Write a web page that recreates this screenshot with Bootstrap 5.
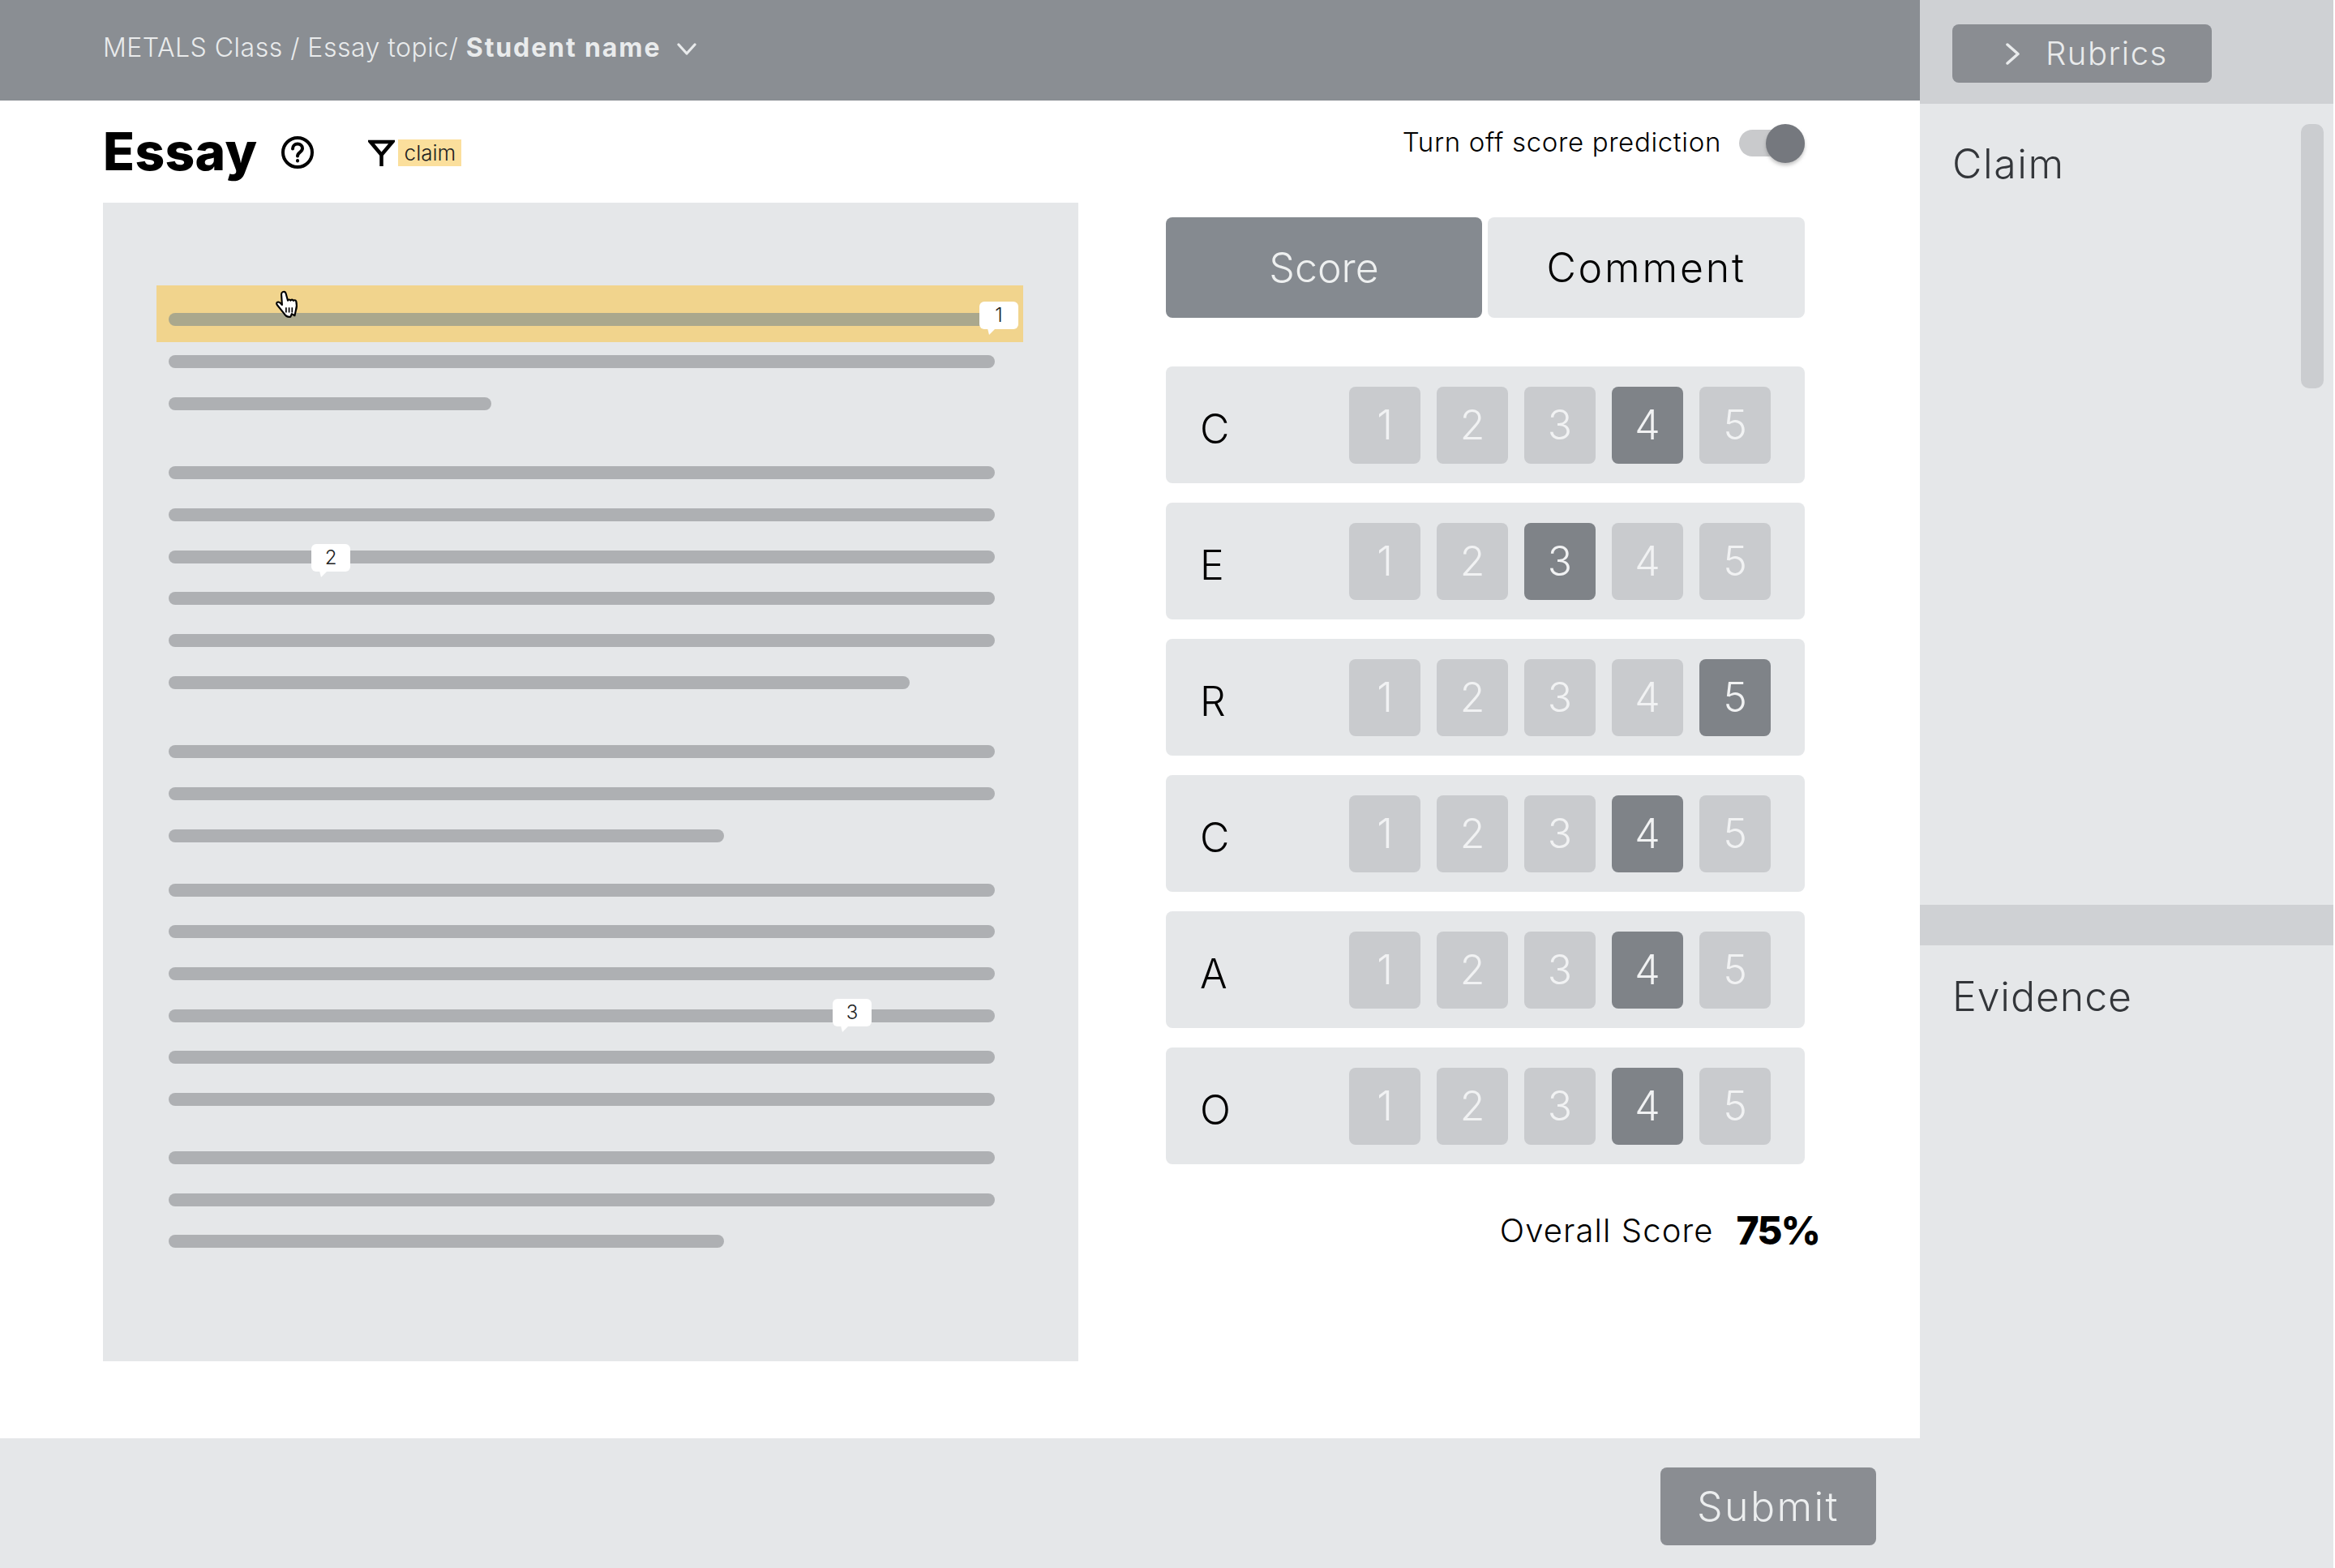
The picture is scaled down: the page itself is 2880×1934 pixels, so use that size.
<!doctype html>
<html lang="en">
<head>
<meta charset="utf-8">
<title>Essay</title>
<link rel="stylesheet" href="https://cdn.jsdelivr.net/npm/bootstrap@5.3.0/dist/css/bootstrap.min.css">
<style>
html,body{width:2880px;height:1934px;overflow:hidden;background:#fff}
body{font-family:"Inter","Liberation Sans",sans-serif;font-weight:300;color:#000}
.shell{width:2880px;height:1934px}
.left-col{width:2368px}
.top-strip{height:124px;background:#8a8e93;color:#e9ebec;font-size:32px;padding:0 0 7px 127px}
.top-strip strong{font-weight:700;letter-spacing:1.9px}
.crumb{letter-spacing:.5px}
.crumb-arrow{margin-left:20px;margin-top:4px}
.work{padding:0 142px 0 127px}
.title-line{height:126px}
.essay-title{font-size:64px;font-weight:800;line-height:1;margin:0 30px 0 0;letter-spacing:.4px}
.help-ic{margin-top:2px}
.filter-ic{margin-left:67px;margin-right:4px;margin-top:2px}
.tag-chip{width:78px;height:33px;margin-top:3px;background:#fbdf9c;font-size:26px;font-weight:300;line-height:33px;text-align:center;color:#222}
.toggle-wrap{margin-top:-22px}
.toggle-label{font-size:33px;letter-spacing:.65px;font-weight:300;margin-right:22px}
.toggle-track{width:81px;height:33px;border-radius:17px;background:#c9cacc}
.toggle-knob{position:absolute;right:0;top:-7px;width:48px;height:48px;border-radius:50%;background:#75787e;box-shadow:0 3px 4px rgba(90,90,90,.35)}
.essay-panel{width:1203px;height:1429px;background:#e5e7e9;padding:102px 103px 0 81px;flex:none}
.hl{background:#f1d48d;margin:0 -35px 0 -15px;padding:34px 35px 20px 15px}
.stack{gap:35.7px}
.gap-a{margin-top:16px}
.gap-b{margin-top:69.5px}
.gap-c{margin-top:51px}
.gap-d{margin-top:56px}
.line-bar{height:16px;border-radius:8px;background:#aeb0b3;position:relative}
.line-bar.on{background:#aaa88d}
.w-a{width:398px}.w-b{width:914px}.w-c{width:685px}
.pin{position:absolute;width:48px;height:34px;background:#fff;border-radius:6px;font-size:24px;line-height:34px;text-align:center;font-weight:300;color:#222}
.pin::after{content:"";position:absolute;left:10px;top:33px;border-style:solid;border-width:8px 8px 0 2px;border-color:#fff transparent transparent transparent}
.pin-1{right:-29px;top:-14px}
.pin-2{left:176px;top:-8px}
.pin-3{left:819px;top:-13px}
.hand{position:absolute;left:339px;top:358px;width:32px;height:36px}
.score-col{width:788px;margin-left:108px;padding-top:18px;flex:none}
.tabs-grid{display:grid;grid-template-columns:390px 391px;gap:7px;height:124px}
.tab-btn{font-size:50px;font-weight:300;border:0;border-radius:8px;padding:0}
.tab-on,.tab-on:hover{background:#858a90;color:#eef0f0}
.tab-off,.tab-off:hover{background:#e5e7e9;color:#000;letter-spacing:2.8px}
.crit-list{margin-top:60px;gap:24px}
.crit-row{height:144px;background:#e5e7e9;border-radius:8px;padding:0 42px 0 42px}
.crit-letter{font-size:50px;font-weight:300;line-height:1;width:184px;padding-top:9px}
.num-row{gap:20px}
.num-btn{width:88px;height:95px;padding:0;border:0;border-radius:8px;background:#c9cbce;color:#f1f2f3;font-size:50px;font-weight:300;line-height:1}
.num-btn:hover{background:#c9cbce;color:#f1f2f3}
.num-btn.picked,.num-btn.picked:hover{background:#7f8388;color:#f1f2f3}
.overall{margin-top:52px;margin-right:-18px;height:60px}
.overall-label{font-size:40px;font-weight:300;letter-spacing:1.1px;margin-right:28px}
.overall-val{font-size:48px;font-weight:800;letter-spacing:-2px}
.foot-strip{height:160px;background:#e5e7e9;padding:36px 54px 0 0}
.submit-btn,.submit-btn:hover{width:266px;height:96px;background:#8a8d92;color:#eceeef;border:0;border-radius:8px;font-size:50px;font-weight:300;padding:0;letter-spacing:2.4px}
.side-col{width:510px;margin-right:2px;background:#e5e7e9}
.side-top{height:128px;background:#cfd1d4;padding:30px 0 0 40px}
.rub-btn,.rub-btn:hover{width:320px;height:72px;background:#8a8d92;color:#e9ebec;border:0;border-radius:8px;font-size:40px;font-weight:300;padding:0 0 0 66px;gap:31px;letter-spacing:1.5px}
.side-claim{height:988px;padding:44px 0 0 40px;position:relative}
.side-head{font-size:50px;font-weight:300;color:#33363a;line-height:60px;margin:0;letter-spacing:.9px}
.side-claim .side-head{letter-spacing:1.6px}
.side-thumb{position:absolute;left:470px;top:25px;width:28px;height:326px;border-radius:10px;background:#cbcdd0}
.side-split{height:50px;background:#cfd1d4}
.side-evi{padding:33px 0 0 40px}
</style>
</head>
<body>
<div class="shell d-flex">
  <div class="left-col d-flex flex-column">
    <header class="top-strip d-flex align-items-center">
      <span class="crumb">METALS Class / Essay topic/ <strong>Student name</strong></span>
      <svg class="crumb-arrow" width="24" height="15" viewBox="0 0 24 15" fill="none" stroke="#e9ebec" stroke-width="3.2" stroke-linecap="round" stroke-linejoin="round"><path d="M2 2l10 11L22 2"/></svg>
    </header>
    <main class="work flex-grow-1 position-relative">
      <div class="title-line d-flex align-items-center">
        <h1 class="essay-title">Essay</h1>
        <svg class="help-ic" width="40" height="40" viewBox="0 0 40 40" fill="none" stroke="#000" stroke-width="4" stroke-linecap="round"><circle cx="20" cy="20" r="18"/><path d="M14 15.500c0-3.500 2.700-6 6-6s6 2.400 6 5.500c0 4.500-6 5-6 9.500" /><path d="M20 30v.5"/></svg>
        <svg class="filter-ic" width="33" height="33" viewBox="0 0 33 33" fill="none" stroke="#000" stroke-width="4.500" stroke-linejoin="miter"><path d="M3 3h27L16.500 19z"/><path d="M16.500 18v15"/></svg>
        <span class="tag-chip">claim</span>
        <div class="toggle-wrap ms-auto d-flex align-items-center">
          <span class="toggle-label">Turn off score prediction</span>
          <span class="toggle-track position-relative d-block"><span class="toggle-knob"></span></span>
        </div>
      </div>
      <div class="d-flex">
        <section class="essay-panel d-flex flex-column">
          <div class="hl"><div class="line-bar on"><span class="pin pin-1">1</span></div></div>
          <div class="stack d-flex flex-column gap-a">
            <div class="line-bar"></div>
            <div class="line-bar w-a"></div>
          </div>
          <div class="stack d-flex flex-column gap-b">
            <div class="line-bar"></div>
            <div class="line-bar"></div>
            <div class="line-bar"><span class="pin pin-2">2</span></div>
            <div class="line-bar"></div>
            <div class="line-bar"></div>
            <div class="line-bar w-b"></div>
          </div>
          <div class="stack d-flex flex-column gap-b">
            <div class="line-bar"></div>
            <div class="line-bar"></div>
            <div class="line-bar w-c"></div>
          </div>
          <div class="stack d-flex flex-column gap-c">
            <div class="line-bar"></div>
            <div class="line-bar"></div>
            <div class="line-bar"></div>
            <div class="line-bar"><span class="pin pin-3">3</span></div>
            <div class="line-bar"></div>
            <div class="line-bar"></div>
          </div>
          <div class="stack d-flex flex-column gap-d">
            <div class="line-bar"></div>
            <div class="line-bar"></div>
            <div class="line-bar w-c"></div>
          </div>
        </section>
        <section class="score-col">
          <div class="tabs-grid">
            <button class="btn tab-btn tab-on" type="button">Score</button>
            <button class="btn tab-btn tab-off" type="button">Comment</button>
          </div>
          <div class="crit-list d-flex flex-column">
            <div class="crit-row d-flex align-items-center"><span class="crit-letter">C</span><div class="num-row d-flex"><button class="btn num-btn" type="button">1</button><button class="btn num-btn" type="button">2</button><button class="btn num-btn" type="button">3</button><button class="btn num-btn picked" type="button">4</button><button class="btn num-btn" type="button">5</button></div></div>
            <div class="crit-row d-flex align-items-center"><span class="crit-letter">E</span><div class="num-row d-flex"><button class="btn num-btn" type="button">1</button><button class="btn num-btn" type="button">2</button><button class="btn num-btn picked" type="button">3</button><button class="btn num-btn" type="button">4</button><button class="btn num-btn" type="button">5</button></div></div>
            <div class="crit-row d-flex align-items-center"><span class="crit-letter">R</span><div class="num-row d-flex"><button class="btn num-btn" type="button">1</button><button class="btn num-btn" type="button">2</button><button class="btn num-btn" type="button">3</button><button class="btn num-btn" type="button">4</button><button class="btn num-btn picked" type="button">5</button></div></div>
            <div class="crit-row d-flex align-items-center"><span class="crit-letter">C</span><div class="num-row d-flex"><button class="btn num-btn" type="button">1</button><button class="btn num-btn" type="button">2</button><button class="btn num-btn" type="button">3</button><button class="btn num-btn picked" type="button">4</button><button class="btn num-btn" type="button">5</button></div></div>
            <div class="crit-row d-flex align-items-center"><span class="crit-letter">A</span><div class="num-row d-flex"><button class="btn num-btn" type="button">1</button><button class="btn num-btn" type="button">2</button><button class="btn num-btn" type="button">3</button><button class="btn num-btn picked" type="button">4</button><button class="btn num-btn" type="button">5</button></div></div>
            <div class="crit-row d-flex align-items-center"><span class="crit-letter">O</span><div class="num-row d-flex"><button class="btn num-btn" type="button">1</button><button class="btn num-btn" type="button">2</button><button class="btn num-btn" type="button">3</button><button class="btn num-btn picked" type="button">4</button><button class="btn num-btn" type="button">5</button></div></div>
          </div>
          <div class="overall d-flex align-items-center justify-content-end">
            <span class="overall-label">Overall Score</span><span class="overall-val">75%</span>
          </div>
        </section>
      </div>
    </main>
    <footer class="foot-strip d-flex justify-content-end align-items-start">
      <button class="btn submit-btn" type="button">Submit</button>
    </footer>
  </div>
  <aside class="side-col d-flex flex-column">
    <div class="side-top">
      <button class="btn rub-btn d-flex align-items-center" type="button">
        <svg width="18" height="27" viewBox="0 0 18 27" fill="none" stroke="#e9ebec" stroke-width="3.500" stroke-linecap="round" stroke-linejoin="round"><path d="M2 2l13 11.500L2 25"/></svg>
        <span>Rubrics</span>
      </button>
    </div>
    <div class="side-claim"><h2 class="side-head">Claim</h2><div class="side-thumb"></div></div>
    <div class="side-split"></div>
    <div class="side-evi flex-grow-1"><h2 class="side-head">Evidence</h2></div>
  </aside>
</div>
<svg class="hand" viewBox="0 0 30 34" stroke="#000" stroke-width="2" stroke-linejoin="round" fill="#fff"><path d="M9 2c1.800-1 3.200 0 3.800 2l2.200 8c.4-1.600 2.600-1.600 3.300 0 .5-1.400 2.500-1.400 3.200.2.800-1 2.600-.8 3.200.6.900 3.500.8 7.500-.5 11.200l-1.200 5.500-3.400-2-1.500 3.500c-3.500.5-6-1.500-7.500-4L2.500 17c-1.200-1.700-.5-3.400 1.300-3.300 1.300.1 3 1.500 4.500 3.300L7.500 5C7.400 3.500 8 2.500 9 2z"/><path d="M13 20v6M16.500 20v6M20 20v6" stroke-width="1.600" fill="none"/></svg>
<script src="https://cdn.jsdelivr.net/npm/bootstrap@5.3.0/dist/js/bootstrap.bundle.min.js"></script>
</body>
</html>
